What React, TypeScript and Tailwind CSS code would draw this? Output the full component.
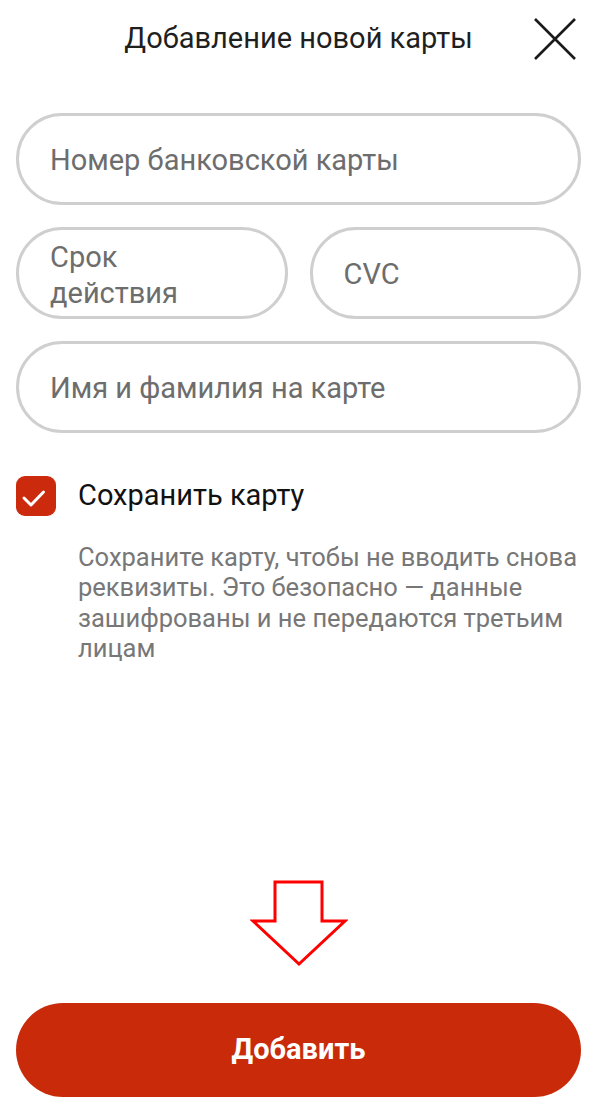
const Field = ({ children, className = "" }: { children: React.ReactNode; className?: string }) => {
  return (
    <div
      className={`h-[92px] rounded-full border-[3px] border-[#cfcfcf] flex items-center pl-[31px] text-[29px] leading-[36px] text-[#6d6d6d] ${className}`}
    >
      {children}
    </div>
  );
};

const App = () => {
  return (
    <div className="w-[609px] min-h-[1114px] bg-white flex flex-col pl-4 pr-[28px] pb-[17px] font-['Roboto',sans-serif]">
      <div className="h-[78px] grid grid-cols-[1fr_auto_1fr] items-center">
        <div></div>
        <div className="text-[29px] text-[#1f1f1f]">Добавление новой карты</div>
        <div className="flex justify-end pr-[4px]">
          <svg width="44" height="44" viewBox="0 0 44 44" fill="none">
            <path d="M2 2 L42 42 M42 2 L2 42" stroke="#1a1a1a" strokeWidth="2.6" />
          </svg>
        </div>
      </div>

      <div className="mt-[35px] flex flex-col gap-[22px]">
        <Field className="pt-[2px]">Номер банковской карты</Field>
        <div className="grid grid-cols-2 gap-[22px]">
          <Field className="pt-[4px]">
            Срок
            <br />
            действия
          </Field>
          <Field className="pt-[2px]">CVC</Field>
        </div>
        <Field className="pt-[2px]">Имя и фамилия на карте</Field>
      </div>

      <div className="mt-[41px] flex items-center gap-[22px]">
        <div className="w-10 h-10 rounded-[9px] bg-[#cc2a0c]">
          <svg width="40" height="40" viewBox="0 0 40 40" fill="none">
            <path d="M8 22 L15 29 L27.5 16" stroke="white" strokeWidth="3" strokeLinecap="round" strokeLinejoin="round" />
          </svg>
        </div>
        <div className="text-[29px] text-[#111]">Сохранить карту</div>
      </div>

      <p className="mt-[24px] ml-[62px] text-[25.5px] leading-[30.5px] text-[#777]">
        Сохраните карту, чтобы не вводить снова реквизиты. Это безопасно — данные зашифрованы и не передаются третьим лицам
      </p>

      <div className="flex-1"></div>

      <div className="flex justify-center">
        <svg width="98" height="87" viewBox="0 0 98 87" fill="none">
          <path d="M25 2 H72 V41 H95 L49 84 L3 41 H25 Z" stroke="#ff0000" strokeWidth="3" fill="white" />
        </svg>
      </div>

      <button className="mt-[36px] h-[94px] w-full rounded-full bg-[#c92a0a] text-white text-[29px] font-bold">
        Добавить
      </button>
    </div>
  );
};

export default App;
